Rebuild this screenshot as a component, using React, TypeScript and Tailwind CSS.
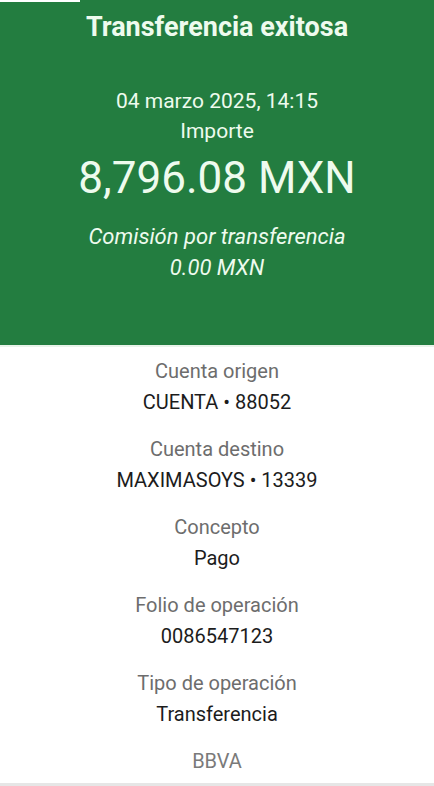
const rows = [
  { label: "Cuenta origen", value: "CUENTA • 88052" },
  { label: "Cuenta destino", value: "MAXIMASOYS • 13339" },
  { label: "Concepto", value: "Pago" },
  { label: "Folio de operación", value: "0086547123" },
  { label: "Tipo de operación", value: "Transferencia" },
];

export default function App() {
  return (
    <div
      className="relative flex h-[786px] w-[434px] flex-col overflow-hidden bg-white text-center"
      style={{ fontFamily: "Roboto, 'Liberation Sans', sans-serif" }}
    >
      <div className="absolute left-0 top-0 h-[2px] w-[80px] bg-white" />
      <section className="flex h-[345px] flex-col items-center bg-[#237d40] text-[#eefbee]">
        <h1 className="mt-[10px] text-[27px] font-bold leading-[34px]">Transferencia exitosa</h1>
        <p className="mt-[42px] text-[21px] leading-[30px]">04 marzo 2025, 14:15</p>
        <p className="text-[21px] leading-[30px]">Importe</p>
        <p className="mt-[7px] text-[44px] leading-[50px]">8,796.08 MXN</p>
        <p className="mt-[18px] text-[22px] italic leading-[31px]">Comisión por transferencia</p>
        <p className="text-[22px] italic leading-[31px]">0.00 MXN</p>
      </section>
      <div className="h-[2px] bg-[#e9f3ea]" />
      <div className="flex flex-col items-center pt-[9px]">
        {rows.map((r) => (
          <div key={r.label} className="mb-[16px] flex flex-col items-center">
            <p className="text-[20px] leading-[31px] text-[#6d6d6d]">{r.label}</p>
            <p className="text-[20px] leading-[31px] text-[#1c1c1c]">{r.value}</p>
          </div>
        ))}
        <p className="text-[20px] leading-[31px] text-[#7a7a7a]">BBVA</p>
      </div>
      <div className="absolute bottom-0 left-0 h-[3px] w-full bg-[#e6e6e6]" />
    </div>
  );
}
